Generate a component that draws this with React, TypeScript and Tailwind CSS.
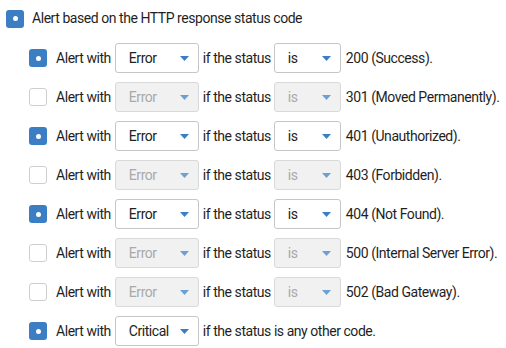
import React from "react";

type Row = { on: boolean; level: string; tail: string; any?: boolean };

const rows: Row[] = [
    { on: true, level: "Error", tail: "200 (Success)." },
    { on: false, level: "Error", tail: "301 (Moved Permanently)." },
    { on: true, level: "Error", tail: "401 (Unauthorized)." },
    { on: false, level: "Error", tail: "403 (Forbidden)." },
    { on: true, level: "Error", tail: "404 (Not Found)." },
    { on: false, level: "Error", tail: "500 (Internal Server Error)." },
    { on: false, level: "Error", tail: "502 (Bad Gateway)." },
    { on: true, level: "Critical", tail: "", any: true },
];

function Check({ on }: { on: boolean }) {
    if (on) {
        return (
            <span className="flex h-[18px] w-[18px] shrink-0 items-center justify-center rounded-[3px] bg-[#3b7ec3]">
                <span className="h-[5px] w-[5px] rounded-full bg-white" />
            </span>
        );
    }
    return <span className="h-[18px] w-[18px] shrink-0 rounded-[3px] border border-[#cfcfcf] bg-white" />;
}

function Select({ value, width, disabled }: { value: string; width: string; disabled: boolean }) {
    return (
        <div
            className={`flex h-[30px] ${width} shrink-0 items-center justify-between rounded-[3px] border pl-[13px] pr-[9px] ${
                disabled ? "border-[#d9d9d9] bg-[#f1f1f1] text-[#a9a9a9]" : "border-[#c6c6c6] bg-white text-[#222]"
            }`}
        >
            <span>{value}</span>
            <svg width="9" height="5" viewBox="0 0 9 5" className={disabled ? "text-[#6c9fd3]" : "text-[#3b7ec3]"}>
                <path d="M0 0H9L4.5 5Z" fill="currentColor" />
            </svg>
        </div>
    );
}

export default function App() {
    return (
        <div className="h-[348px] w-[506px] overflow-hidden bg-white text-[14px] tracking-[-0.45px] text-[#1f1f1f] font-['Roboto',Arial,sans-serif] whitespace-nowrap">
            <div className="flex items-center gap-[8px] pl-[6px] pt-[8px]">
                <Check on />
                <span>Alert based on the HTTP response status code</span>
            </div>
            <div className="mt-[14px] flex flex-col gap-[9px] pl-[29px]">
                {rows.map((r, i) => (
                    <div key={i} className="flex h-[30px] items-center">
                        <Check on={r.on} />
                        <span className="ml-[9px] mr-[4px] shrink-0">Alert with</span>
                        <Select value={r.level} width="w-[84px]" disabled={!r.on} />
                        {r.any ? (
                            <span className="ml-[4px] shrink-0">if the status is any other code.</span>
                        ) : (
                            <>
                                <span className="ml-[4px] mr-[3px] shrink-0">if the status</span>
                                <Select value="is" width="w-[67px]" disabled={!r.on} />
                                <span className="ml-[5px] shrink-0">{r.tail}</span>
                            </>
                        )}
                    </div>
                ))}
            </div>
        </div>
    );
}
